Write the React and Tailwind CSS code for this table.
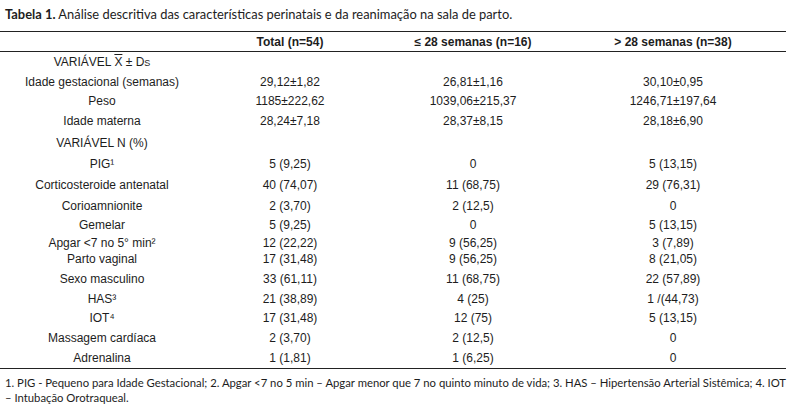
import React from "react";

const rows = [
  { label: "VARIÁVEL_X", h: "h-[20px]", v: ["", "", ""] },
  { label: "Idade gestacional (semanas)", h: "h-[20px]", v: ["29,12±1,82", "26,81±1,16", "30,10±0,95"] },
  { label: "Peso", h: "h-[18px]", v: ["1185±222,62", "1039,06±215,37", "1246,71±197,64"] },
  { label: "Idade materna", h: "h-[22px]", v: ["28,24±7,18", "28,37±8,15", "28,18±6,90"] },
  { label: "VARIÁVEL N (%)", h: "h-[22px]", v: ["", "", ""] },
  { label: "PIG¹", h: "h-[20px]", v: ["5 (9,25)", "0", "5 (13,15)"] },
  { label: "Corticosteroide antenatal", h: "h-[22px]", v: ["40 (74,07)", "11 (68,75)", "29 (76,31)"] },
  { label: "Corioamnionite", h: "h-[20px]", v: ["2 (3,70)", "2 (12,5)", "0"] },
  { label: "Gemelar", h: "h-[18px]", v: ["5 (9,25)", "0", "5 (13,15)"] },
  { label: "Apgar <7 no 5° min²", h: "h-[16px]", v: ["12 (22,22)", "9 (56,25)", "3 (7,89)"] },
  { label: "Parto vaginal", h: "h-[18px]", v: ["17 (31,48)", "9 (56,25)", "8 (21,05)"] },
  { label: "Sexo masculino", h: "h-[22px]", v: ["33 (61,11)", "11 (68,75)", "22 (57,89)"] },
  { label: "HAS³", h: "h-[18px]", v: ["21 (38,89)", "4 (25)", "1 /(44,73)"] },
  { label: "IOT⁴", h: "h-[20px]", v: ["17 (31,48)", "12 (75)", "5 (13,15)"] },
  { label: "Massagem cardíaca", h: "h-[20px]", v: ["2 (3,70)", "2 (12,5)", "0"] },
  { label: "Adrenalina", h: "h-[20px]", v: ["1 (1,81)", "1 (6,25)", "0"] },
];

const Label = ({ text }) => {
  if (text === "VARIÁVEL_X") {
    return (
      <span>
        VARIÁVEL <span className="overline">X</span> ± D<span className="text-[9px]">S</span>
      </span>
    );
  }
  return <span>{text}</span>;
};

export default function App() {
  return (
    <div className="w-[796px] h-[410px] bg-white text-[#1d1d1d] overflow-hidden">
      {/* Caption */}
      <p className="pl-[5px] pt-[5px] h-[23px] text-[12.9px] leading-[18px] font-['Lato',sans-serif] whitespace-nowrap">
        <span className="font-bold">Tabela 1.</span> Análise descritiva das características perinatais e da reanimação na sala de parto.
      </p>

      {/* Table */}
      <div className="mt-[8px] w-[786px] border-t-[1.5px] border-b-[1.5px] border-[#222] font-['Liberation_Sans',Arial,sans-serif] text-[12px]">
        <div className="grid grid-cols-[204px_172px_194px_216px] h-[20px] items-center text-center font-bold border-b border-[#222]">
          <div></div>
          <div>Total (n=54)</div>
          <div>≤ 28 semanas (n=16)</div>
          <div className="pr-[10px]">&gt; 28 semanas (n=38)</div>
        </div>
        {rows.map((r, i) => (
          <div
            key={i}
            className={`grid grid-cols-[204px_172px_194px_216px] items-center text-center ${r.h}`}
          >
            <div className="whitespace-nowrap">
              <Label text={r.label} />
            </div>
            <div>{r.v[0]}</div>
            <div>{r.v[1]}</div>
            <div className="pr-[10px]">{r.v[2]}</div>
          </div>
        ))}
      </div>

      {/* Footnote */}
      <p className="pl-[5px] pt-[6px] text-[11.3px] leading-[15px] font-['Lato',sans-serif] whitespace-nowrap">
        1. PIG - Pequeno para Idade Gestacional; 2. Apgar &lt;7 no 5 min – Apgar menor que 7 no quinto minuto de vida; 3. HAS – Hipertensão Arterial Sistêmica; 4. IOT
        <br />– Intubação Orotraqueal.
      </p>
    </div>
  );
}
